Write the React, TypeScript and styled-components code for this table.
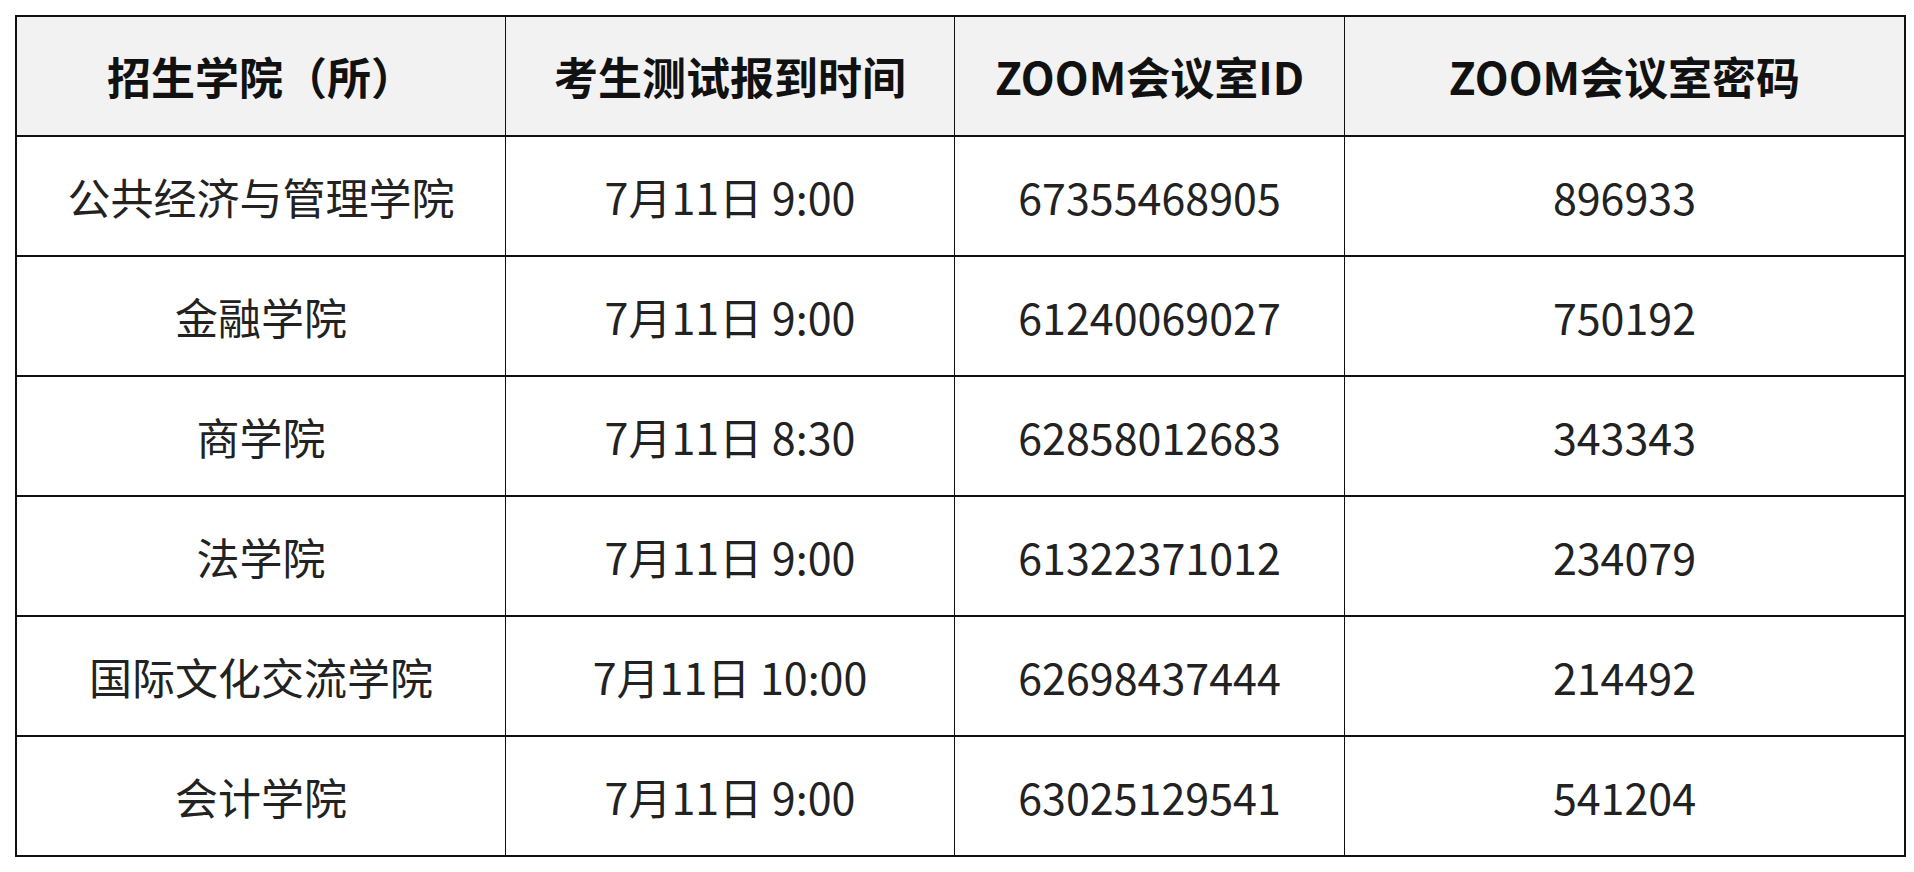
import styled, { createGlobalStyle } from "styled-components"

const GlobalStyle = createGlobalStyle`
  html, body {
    margin: 0;
    padding: 0;
    background: #ffffff;
  }
  body {
    font-family: "Noto Sans CJK SC", "Noto Sans", sans-serif;
    color: #1a1a1a;
  }
`

const Page = styled.div`
  padding: 15px;
`

const Table = styled.table`
  width: 1884px;
  table-layout: fixed;
  border-collapse: collapse;
  border: 2px solid #111;
`

const HeadRow = styled.tr`
  height: 120px;
  background: #f2f2f2;
`

const Row = styled.tr`
  height: 120px;
`

const HeadCell = styled.th<{ $w: number }>`
  width: ${({ $w }) => `${$w}px`};
  padding: 0;
  font-size: 44px;
  font-weight: 700;
  color: #111;
  text-align: center;
  vertical-align: middle;
  border-top: 2px solid #111;
  border-bottom: 2px solid #111;
  border-left: 1.5px solid #111;
  border-right: 1.5px solid #111;
  white-space: nowrap;
`

const Cell = styled.td`
  padding: 0;
  font-size: 43px;
  font-weight: 400;
  color: #222;
  text-align: center;
  vertical-align: middle;
  border-top: 2px solid #111;
  border-bottom: 2px solid #111;
  border-left: 1.5px solid #111;
  border-right: 1.5px solid #111;
  white-space: nowrap;
`

const columns = [
  { title: "招生学院（所）", width: 488 },
  { title: "考生测试报到时间", width: 448 },
  { title: "ZOOM会议室ID", width: 389 },
  { title: "ZOOM会议室密码", width: 559 },
]

const rows = [
  ["公共经济与管理学院", "7月11日 9:00", "67355468905", "896933"],
  ["金融学院", "7月11日 9:00", "61240069027", "750192"],
  ["商学院", "7月11日 8:30", "62858012683", "343343"],
  ["法学院", "7月11日 9:00", "61322371012", "234079"],
  ["国际文化交流学院", "7月11日 10:00", "62698437444", "214492"],
  ["会计学院", "7月11日 9:00", "63025129541", "541204"],
]

export default function App() {
  return (
    <Page>
      <GlobalStyle />
      <Table>
        <thead>
          <HeadRow>
            {columns.map((c) => (
              <HeadCell key={c.title} $w={c.width}>
                {c.title}
              </HeadCell>
            ))}
          </HeadRow>
        </thead>
        <tbody>
          {rows.map((r) => (
            <Row key={r[2]}>
              {r.map((v, i) => (
                <Cell key={i}>{v}</Cell>
              ))}
            </Row>
          ))}
        </tbody>
      </Table>
    </Page>
  )
}
